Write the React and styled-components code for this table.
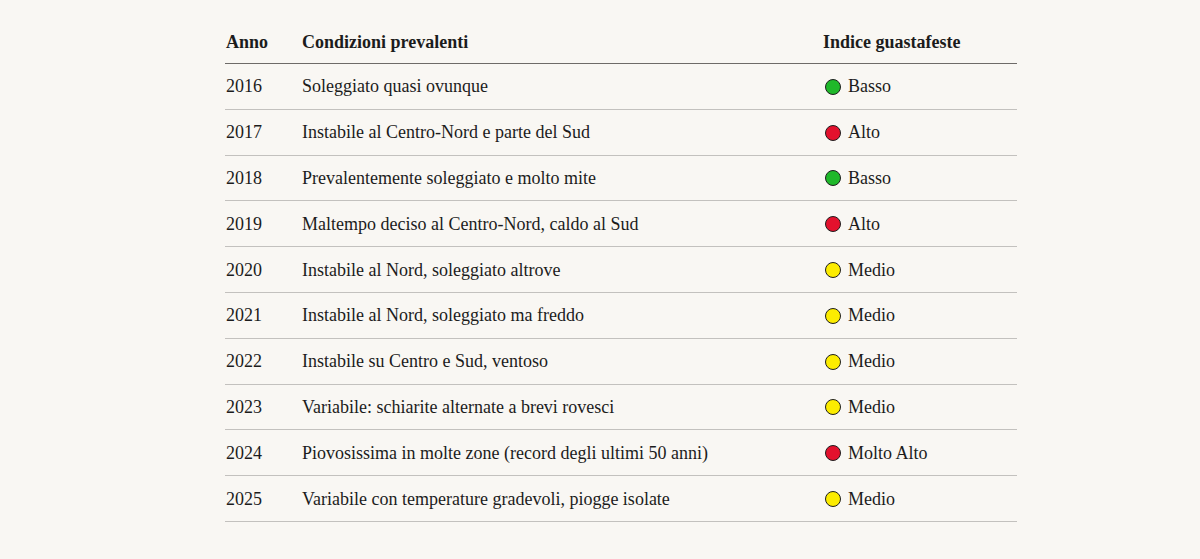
import React from 'react';
import styled, { createGlobalStyle } from 'styled-components';

const GlobalStyle = createGlobalStyle`
  body {
    margin: 0;
    background: #f9f7f3;
    font-family: "Liberation Serif", "Times New Roman", serif;
    color: #1c1c1c;
  }
`;

const Page = styled.div`
  min-height: 559px;
  padding: 19px 0 0 225px;
  box-sizing: border-box;
`;

const Table = styled.div`
  width: 792px;
`;

const Row = styled.div`
  display: grid;
  grid-template-columns: 76px 521px 1fr;
  align-items: center;
  box-sizing: border-box;
  border-bottom: 1px solid ${(p) => (p.head ? '#6e6b68' : '#c3c1be')};
  font-size: 18px;
  font-weight: ${(p) => (p.head ? 700 : 400)};
  height: ${(p) => (p.head ? '45px' : '45.8px')};
  padding-top: ${(p) => (p.head ? '3px' : '1px')};
`;

const Cell = styled.div`
  padding-left: 1px;
  white-space: nowrap;
`;

const Level = styled.div`
  display: flex;
  align-items: center;
  gap: 7px;
  padding-left: 3px;
`;

const Dot = styled.span`
  width: 14px;
  height: 14px;
  border-radius: 50%;
  border: 1px solid #1e1e1e;
  background: ${(p) => p.color};
  flex-shrink: 0;
`;

const COLORS = {
  low: '#1fb82a',
  mid: '#fcec00',
  high: '#e3112d',
};

const rows = [
  ['2016', 'Soleggiato quasi ovunque', 'low', 'Basso'],
  ['2017', 'Instabile al Centro-Nord e parte del Sud', 'high', 'Alto'],
  ['2018', 'Prevalentemente soleggiato e molto mite', 'low', 'Basso'],
  ['2019', 'Maltempo deciso al Centro-Nord, caldo al Sud', 'high', 'Alto'],
  ['2020', 'Instabile al Nord, soleggiato altrove', 'mid', 'Medio'],
  ['2021', 'Instabile al Nord, soleggiato ma freddo', 'mid', 'Medio'],
  ['2022', 'Instabile su Centro e Sud, ventoso', 'mid', 'Medio'],
  ['2023', 'Variabile: schiarite alternate a brevi rovesci', 'mid', 'Medio'],
  ['2024', 'Piovosissima in molte zone (record degli ultimi 50 anni)', 'high', 'Molto Alto'],
  ['2025', 'Variabile con temperature gradevoli, piogge isolate', 'mid', 'Medio'],
];

const App = () => {
  return (
    <Page>
      <GlobalStyle />
      <Table>
        <Row head>
          <Cell>Anno</Cell>
          <Cell>Condizioni prevalenti</Cell>
          <Cell>Indice guastafeste</Cell>
        </Row>
        {rows.map(([year, text, level, label]) => (
          <Row key={year}>
            <Cell>{year}</Cell>
            <Cell>{text}</Cell>
            <Level>
              <Dot color={COLORS[level]} />
              {label}
            </Level>
          </Row>
        ))}
      </Table>
    </Page>
  );
};

export default App;
